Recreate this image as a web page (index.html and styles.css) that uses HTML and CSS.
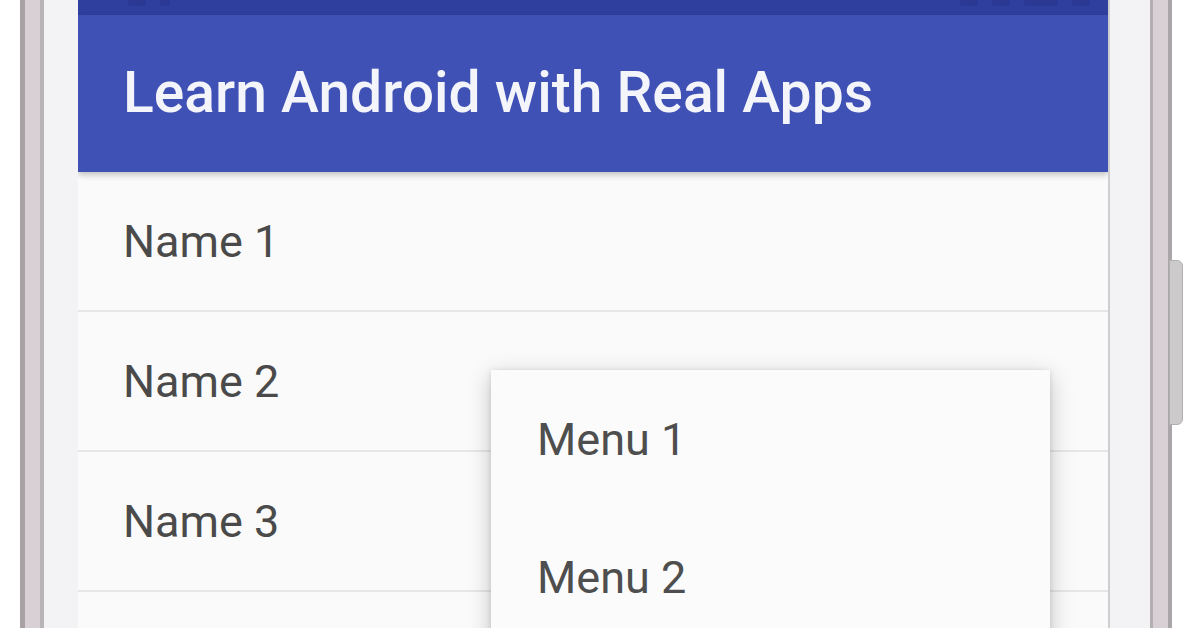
FILE: index.html
```html
<!DOCTYPE html>
<html>
<head>
<meta charset="utf-8">
<link rel="stylesheet" href="styles.css">
</head>
<body>
<div class="frame">
  <div class="bezel">
    <div class="screen">
      <div class="statusbar">
        <div class="st-left"><span class="st-ico"></span><span class="st-ico small"></span></div>
        <div class="st-right"><span class="st-ico"></span><span class="st-ico"></span><span class="st-ico wide"></span><span class="st-ico"></span></div>
      </div>
      <div class="appbar"><h1 class="title">Learn Android with Real Apps</h1></div>
      <ul class="list">
        <li class="row">Name 1</li>
        <li class="row">Name 2</li>
        <li class="row">Name 3</li>
        <li class="row">Name 4</li>
      </ul>
      <div class="menu">
        <div class="menu-item">Menu 1</div>
        <div class="menu-item">Menu 2</div>
      </div>
    </div>
  </div>
  <div class="side-button"></div>
</div>
</body>
</html>
```
FILE: styles.css
```css
html, body {
  margin: 0;
  padding: 0;
  background: #ffffff;
  height: 628px;
  overflow: hidden;
  font-family: Roboto, "Noto Sans", "Liberation Sans", sans-serif;
}
.frame {
  position: relative;
  margin-left: 20px;
  width: 1152px;
  height: 628px;
  box-sizing: border-box;
  border-left: 5px solid #a8a2a5;
  border-right: 4px solid #aaa5a8;
  background: #d8d0d4;
  padding: 0 15px 0 15px;
  display: flex;
}
.bezel {
  flex: 1;
  display: flex;
  box-sizing: border-box;
  border-left: 4px solid #b8b3b6;
  border-right: 3px solid #b3afb1;
  background: #f3f3f5;
  padding: 0 40px 0 34px;
}
.screen {
  position: relative;
  flex: 1;
  display: flex;
  flex-direction: column;
  background: #fafafa;
  border-right: 2px solid #cfcfd2;
  overflow: hidden;
}
.statusbar {
  flex-shrink: 0;
  height: 15px;
  background: #2f3f9e;
  display: flex;
  justify-content: space-between;
  padding: 0 18px 0 50px;
}
.st-left, .st-right {
  display: flex;
  gap: 14px;
}
.st-ico {
  display: block;
  width: 18px;
  height: 6px;
  background: #2b3994;
  border-radius: 0 0 3px 3px;
}
.st-ico.small { width: 10px; }
.st-ico.wide { width: 34px; }
.appbar {
  flex-shrink: 0;
  height: 157px;
  background: #3f51b5;
  display: flex;
  align-items: center;
  padding-left: 45px;
  box-shadow: 0 3px 6px rgba(0,0,0,0.22);
  position: relative;
  z-index: 1;
}
.title {
  margin: 0;
  color: #f4f5fb;
  font-size: 57px;
  font-weight: 500;
  padding-bottom: 2px;
}
.list {
  flex-shrink: 0;
  list-style: none;
  margin: 0;
  padding: 0;
}
.row {
  height: 138px;
  border-bottom: 2px solid #e6e6e8;
  display: flex;
  align-items: center;
  padding-left: 45px;
  font-size: 45px;
  color: #4a4a4a;
  background: #fafafa;
}
.menu {
  position: absolute;
  left: 413px;
  top: 370px;
  width: 559px;
  background: #fbfbfb;
  box-shadow: 0 6px 22px rgba(0,0,0,0.22), 0 1px 5px rgba(0,0,0,0.12);
  z-index: 2;
}
.menu-item {
  height: 138px;
  display: flex;
  align-items: center;
  padding-left: 46px;
  font-size: 45px;
  color: #4e4e4e;
}
.side-button {
  position: absolute;
  right: -15px;
  top: 260px;
  width: 12px;
  height: 163px;
  background: #cdcacb;
  border: 1px solid #b3afb1;
  border-radius: 0 6px 6px 0;
}
```
